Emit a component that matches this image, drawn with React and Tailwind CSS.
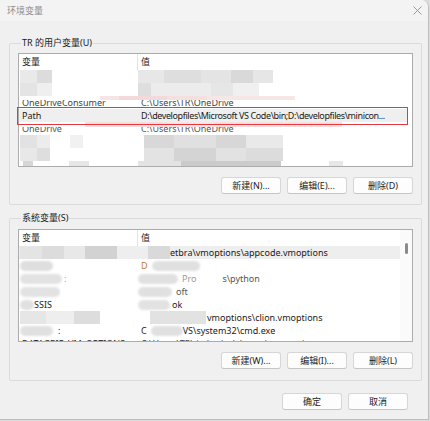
import React from 'react';

function Btn({ children }) {
    return (
        <button className="w-[60px] h-[17px] shrink-0 bg-[#fdfdfd] border border-[#d6d6d6] border-b-[#c6c6c6] rounded-[3px] text-[9px] leading-none text-[#1b1b1b] flex items-center justify-center">
            {children}
        </button>
    );
}

function Header() {
    return (
        <div className="flex h-[16px] shrink-0 text-[9px] text-[#1a1a1a]">
            <div className="w-[119px] pl-[3px] border-r border-[#e3e3e3] flex items-center">变量</div>
            <div className="flex-1 pl-[3px] flex items-center">值</div>
        </div>
    );
}

function Group({ label, className, children }) {
    return (
        <fieldset className={'ml-[9px] w-[413px] border border-[#dadada] rounded-[2px] pl-[8px] ' + className}>
            <legend className="ml-[3px] px-[1px] text-[9px] leading-[12px] text-[#1a1a1a]">{label}</legend>
            {children}
        </fieldset>
    );
}

function UserList() {
    return (
        <div className="w-[395px] h-[114px] mt-[4px] bg-white border border-[#acacac] flex flex-col text-[9px] text-[#1a1a1a]">
            <Header />
            {/* row 1 */}
            <div className="flex h-[13px] shrink-0">
                <div className="w-[119px] flex pl-[1px] shrink-0">
                    <div className="w-[17px] bg-[#e9e9e9]" />
                    <div className="w-[15px] bg-[#dcdcdc]" />
                </div>
                <div className="flex">
                    <div className="w-[26px] bg-[#e7e7e7]" />
                    <div className="w-[37px] bg-[#dedede]" />
                    <div className="w-[30px] bg-[#e4e4e4]" />
                    <div className="w-[22px] bg-[#d9d9d9]" />
                    <div className="w-[20px] bg-[#e6e6e6]" />
                </div>
            </div>
            {/* row 2 */}
            <div className="flex h-[13px] shrink-0">
                <div className="w-[119px] flex pl-[1px] shrink-0">
                    <div className="w-[17px] bg-[#e4e4e4]" />
                    <div className="w-[15px] bg-[#efefef]" />
                </div>
                <div className="flex">
                    <div className="w-[13px] bg-[#dedede]" />
                    <div className="w-[60px] bg-[#ececec]" />
                    <div className="w-[22px] bg-[#e6e6e6]" />
                    <div className="w-[26px] bg-[#f0f0f0]" />
                </div>
            </div>
            {/* row 3, top half hidden */}
            <div className="flex flex-col h-[13px] shrink-0">
                <div className="flex h-[4px] shrink-0">
                    <div className="w-[81px] shrink-0" />
                    <div className="w-[19px] bg-[#f7e4e4]" />
                    <div className="w-[48px] bg-[#f3d9d9]" />
                    <div className="w-[40px] bg-[#f5e0e0]" />
                    <div className="w-[88px] bg-[#f7e6e6]" />
                </div>
                <div className="flex h-[9px] overflow-hidden text-[#444]">
                    <div className="w-[119px] pl-[3px] shrink-0 -mt-[4px] leading-[13px]">OneDriveConsumer</div>
                    <div className="pl-[3px] -mt-[4px] leading-[13px]">C:\Users\TR\OneDrive</div>
                </div>
            </div>
            {/* Path row */}
            <div className="relative flex h-[13px] shrink-0 items-center bg-[#efefef] mr-[5px]">
                <div className="w-[119px] pl-[3px] shrink-0">Path</div>
                <div className="pl-[3px] whitespace-nowrap tracking-[-0.4px]">D:\developfiles\Microsoft VS Code\bin;D:\developfiles\minicon...</div>
                <div className="absolute -left-[2px] -top-[2px] w-[391px] h-[18px] border-[1.5px] border-[#e5383e]" />
            </div>
            {/* row 5, top half hidden */}
            <div className="flex flex-col h-[13px] shrink-0">
                <div className="flex h-[5px] shrink-0">
                    <div className="w-[66px] shrink-0" />
                    <div className="w-[82px] bg-[#f4dede]" />
                    <div className="w-[48px] bg-[#f7e6e6]" />
                    <div className="w-[127px] bg-[#f5dfdf]" />
                </div>
                <div className="flex h-[8px] overflow-hidden text-[#555]">
                    <div className="w-[119px] pl-[3px] shrink-0 -mt-[5px] leading-[13px]">OneDrive</div>
                    <div className="pl-[3px] -mt-[5px] leading-[13px]">C:\Users\TR\OneDrive</div>
                </div>
            </div>
            {/* mosaic rows */}
            <div className="flex h-[13px] shrink-0">
                <div className="w-[119px] flex pl-[1px] shrink-0">
                    <div className="w-[17px] bg-[#e2e2e2]" />
                    <div className="w-[13px] bg-[#ececec]" />
                    <div className="w-[20px]" />
                    <div className="w-[13px] bg-[#f1f1f1]" />
                </div>
                <div className="flex">
                    <div className="w-[6px]" />
                    <div className="w-[30px] bg-[#d8d8d8]" />
                    <div className="w-[42px] bg-[#e0e0e0]" />
                    <div className="w-[30px] bg-[#d7d7d7]" />
                    <div className="w-[37px] bg-[#e9e9e9]" />
                </div>
            </div>
            <div className="flex h-[13px] shrink-0">
                <div className="w-[119px] flex pl-[1px] shrink-0">
                    <div className="w-[17px] bg-[#e8e8e8]" />
                    <div className="w-[13px] bg-[#dedede]" />
                </div>
                <div className="flex">
                    <div className="w-[6px]" />
                    <div className="w-[30px] bg-[#e3e3e3]" />
                    <div className="w-[42px] bg-[#d4d4d4]" />
                    <div className="w-[30px] bg-[#e2e2e2]" />
                    <div className="w-[37px] bg-[#dcdcdc]" />
                </div>
            </div>
            <div className="flex h-[5px] shrink-0">
                <div className="w-[119px] flex pl-[4px] shrink-0">
                    <div className="w-[10px] bg-[#d6d6d6]" />
                    <div className="w-[36px]" />
                    <div className="w-[20px] bg-[#e6e6e6]" />
                </div>
                <div className="flex">
                    <div className="w-[43px] bg-[#e3e3e3]" />
                    <div className="w-[100px] bg-[#cbcbcb]" />
                    <div className="w-[48px]" />
                    <div className="w-[14px] bg-[#e8e8e8]" />
                </div>
            </div>
        </div>
    );
}

function Smear({ className }) {
    return <div className={'h-[10px] my-auto rounded-[5px] blur-[1px] ' + className} />;
}

function SystemList() {
    return (
        <div className="w-[395px] h-[113px] mt-[5px] bg-white border border-[#acacac] flex overflow-hidden text-[9px] text-[#1a1a1a]">
            <div className="flex-1 flex flex-col">
                <Header />
                {/* row 1, selected */}
                <div className="flex h-[13px] shrink-0 bg-[#eeeeee] items-center">
                    <div className="w-[119px] h-full flex pl-[1px] shrink-0">
                        <div className="w-[22px] bg-[#e4e4e4]" />
                        <div className="w-[22px] bg-[#dcdcdc]" />
                        <div className="w-[21px] bg-[#e8e8e8]" />
                        <div className="w-[32px] bg-[#d2d2d2]" />
                    </div>
                    <div className="flex h-full items-center">
                        <div className="w-[10px] h-full" />
                        <div className="w-[22px] h-full bg-[#d9d9d9]" />
                        <div className="whitespace-nowrap">etbra\vmoptions\appcode.vmoptions</div>
                    </div>
                </div>
                {/* row 2 */}
                <div className="flex h-[13px] shrink-0 items-center">
                    <div className="w-[119px] h-full flex pl-[1px] shrink-0">
                        <Smear className="w-[33px] bg-[#dedede]" />
                    </div>
                    <div className="flex h-full items-center pl-[3px]">
                        <span className="text-[#c07a30]">D</span>
                        <Smear className="ml-[4px] w-[48px] bg-[#e0e0e0]" />
                    </div>
                </div>
                {/* row 3 */}
                <div className="flex h-[13px] shrink-0 items-center">
                    <div className="w-[119px] h-full flex pl-[1px] shrink-0">
                        <Smear className="w-[42px] bg-[#e2e2e2]" />
                        <span className="ml-[2px] text-[#aaa]">:</span>
                    </div>
                    <div className="flex h-full items-center">
                        <Smear className="w-[40px] bg-[#e0e0e0]" />
                        <span className="ml-[4px] text-[#999]">Pro</span>
                        <div className="w-[26px]" />
                        <span className="text-[#555]">s\python</span>
                    </div>
                </div>
                {/* row 4 */}
                <div className="flex h-[13px] shrink-0 items-center">
                    <div className="w-[119px] h-full flex pl-[1px] shrink-0">
                        <Smear className="w-[40px] bg-[#e2e2e2]" />
                    </div>
                    <div className="flex h-full items-center">
                        <Smear className="w-[34px] bg-[#e0e0e0]" />
                        <span className="ml-[4px] text-[#555]">oft</span>
                    </div>
                </div>
                {/* row 5 */}
                <div className="flex h-[13px] shrink-0 items-center">
                    <div className="w-[119px] h-full flex pl-[1px] items-center shrink-0">
                        <Smear className="w-[14px] bg-[#e0e0e0]" />
                        <span>SSIS</span>
                    </div>
                    <div className="flex h-full items-center">
                        <Smear className="w-[32px] bg-[#e2e2e2]" />
                        <span className="ml-[2px]">ok</span>
                    </div>
                </div>
                {/* row 6 */}
                <div className="flex h-[13px] shrink-0 items-center">
                    <div className="w-[119px] h-full flex pl-[1px] shrink-0">
                        <div className="w-[26px] bg-[#e6e6e6]" />
                        <div className="w-[28px] bg-[#eeeeee]" />
                        <div className="w-[26px] bg-[#dddddd]" />
                    </div>
                    <div className="flex h-full items-center">
                        <div className="w-[12px]" />
                        <div className="w-[56px] h-full bg-[#e2e2e2]" />
                        <span className="ml-[1px] whitespace-nowrap">vmoptions\clion.vmoptions</span>
                    </div>
                </div>
                {/* row 7 */}
                <div className="flex h-[13px] shrink-0 items-center">
                    <div className="w-[119px] h-full flex pl-[1px] items-center shrink-0">
                        <Smear className="w-[33px] bg-[#e0e0e0]" />
                        <span className="ml-[5px]">:</span>
                    </div>
                    <div className="flex h-full items-center pl-[3px]">
                        <span>C</span>
                        <Smear className="ml-[4px] w-[32px] bg-[#e0e0e0]" />
                        <span className="whitespace-nowrap">VS\system32\cmd.exe</span>
                    </div>
                </div>
                {/* row 8 */}
                <div className="flex h-[13px] shrink-0 items-center">
                    <div className="w-[119px] pl-[3px] shrink-0 whitespace-nowrap">DATAGRIP_VM_OPTIONS</div>
                    <div className="pl-[3px] whitespace-nowrap text-[#444]">C:\Users\TR\.jetbrains\datagrip.vmoptions</div>
                </div>
            </div>
            <div className="w-[12px] shrink-0 bg-[#fafafa] flex justify-center pt-[13px]">
                <div className="w-[3px] h-[11px] rounded-[2px] bg-[#8a8a8a]" />
            </div>
        </div>
    );
}

export default function App() {
    return (
        <div className="w-[430px] h-[421px] bg-[#dcdcdc] font-['Noto_Sans','Noto_Sans_CJK_SC',sans-serif]">
            <div className="w-[429px] h-[420px] bg-[#f0f0f0] border-r border-b border-[#bdbdbd] rounded-tr-[7px] flex flex-col">
                <div className="h-[21px] shrink-0 flex items-center justify-between pl-[7px] pr-[6px] bg-[#f3f3f3] rounded-tr-[7px]">
                    <span className="text-[9px] text-[#8d8d8d]">环境变量</span>
                    <svg width="9" height="9" viewBox="0 0 9 9" className="text-[#9a9a9a]">
                        <path d="M0.5 0.5L8.5 8.5M8.5 0.5L0.5 8.5" stroke="currentColor" strokeWidth="1" />
                    </svg>
                </div>
                <Group label="TR 的用户变量(U)" className="mt-[16px] pb-[10px]">
                    <UserList />
                    <div className="w-[395px] flex justify-end gap-[6px] mt-[10px]">
                        <Btn>新建(N)...</Btn>
                        <Btn>编辑(E)...</Btn>
                        <Btn>删除(D)</Btn>
                    </div>
                </Group>
                <Group label="系统变量(S)" className="mt-[7px] pb-[11px]">
                    <SystemList />
                    <div className="w-[395px] flex justify-end gap-[6px] mt-[10px]">
                        <Btn>新建(W)...</Btn>
                        <Btn>编辑(I)...</Btn>
                        <Btn>删除(L)</Btn>
                    </div>
                </Group>
                <div className="flex justify-end gap-[6px] mt-[12px] pr-[20px]">
                    <Btn>确定</Btn>
                    <Btn>取消</Btn>
                </div>
            </div>
        </div>
    );
}
